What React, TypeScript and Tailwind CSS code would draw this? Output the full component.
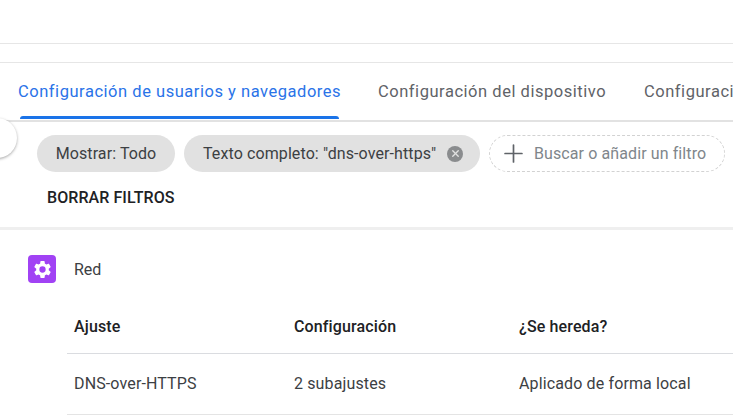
import { Plus, X } from 'lucide-react';

export default function App() {
  return (
    <div className="relative w-[733px] h-[416px] overflow-hidden bg-white font-['Roboto',sans-serif] text-[#3c4043]">
      <div className="h-[43px]" />
      <div className="h-[18px] border-y border-[#e6e6e6] box-content" />

      {/* Tabs */}
      <div className="flex h-[59px] border-b-2 border-[#e2e2e2] whitespace-nowrap text-[16.5px] tracking-[0.53px]">
        <div className="relative w-[360px] shrink-0 pl-[18px] pt-[17px] text-[#2a73e8]">
          Configuración de usuarios y navegadores
          <div className="absolute left-[20px] top-[53px] w-[319px] h-[3px] bg-[#1a73e8] rounded-t" />
        </div>
        <div className="w-[284px] shrink-0 pl-[18px] pt-[17px] text-[#5f6368]">Configuración del dispositivo</div>
        <div className="shrink-0 pt-[17px] text-[#5f6368]">Configuración</div>
      </div>

      {/* Collapse handle */}
      <div className="absolute left-[-23px] top-[118px] w-[40px] h-[40px] rounded-full bg-white shadow-[0_1px_3px_rgba(0,0,0,0.35)]" />

      {/* Filters */}
      <div className="flex items-center gap-[9px] pl-[37px] pt-[13px] whitespace-nowrap text-[16px] tracking-[0.1px]">
        <div className="flex items-center h-[37px] w-[138px] justify-center rounded-full bg-[#e1e1e1]">Mostrar: Todo</div>
        <div className="flex items-center h-[37px] w-[296px] pl-[19px] rounded-full bg-[#e1e1e1]">
          <span>Texto completo: "dns-over-https"</span>
          <span className="ml-[11px] flex items-center justify-center w-[16px] h-[16px] rounded-full bg-[#8a8c8e]">
            <X size={11} strokeWidth={3} className="text-[#e1e1e1]" />
          </span>
        </div>
        <div className="flex items-center h-[37px] w-[236px] pl-[9px] rounded-full border border-dashed border-[#d2d2d2]">
          <Plus size={29} strokeWidth={1.4} className="text-[#5f6368]" />
          <span className="ml-[6px] text-[#80868b]">Buscar o añadir un filtro</span>
        </div>
      </div>
      <div className="pl-[47px] pt-[16px] text-[16px] tracking-[0.08px] font-medium text-[#202124] leading-[20px]">BORRAR FILTROS</div>

      <div className="mt-[19px] h-[3px] bg-[#efefef]" />

      {/* Section */}
      <div className="flex items-center pl-[28px] pt-[25px]">
        <div className="flex items-center justify-center w-[28px] h-[28px] rounded-[4px] bg-[#a142f4]">
          <svg width="21" height="21" viewBox="0 0 24 24" fill="#fff">
            <path d="M19.14 12.94c.04-.3.06-.61.06-.94s-.02-.64-.07-.94l2.03-1.58a.49.49 0 0 0 .12-.61l-1.92-3.32a.49.49 0 0 0-.59-.22l-2.39.96a7 7 0 0 0-1.62-.94l-.36-2.54a.48.48 0 0 0-.48-.41h-3.84a.48.48 0 0 0-.47.41l-.36 2.54c-.59.24-1.13.57-1.62.94l-2.39-.96a.48.48 0 0 0-.59.22L2.74 8.87a.48.48 0 0 0 .12.61l2.03 1.58c-.05.3-.09.63-.09.94s.02.64.07.94l-2.03 1.58a.49.49 0 0 0-.12.61l1.92 3.32c.12.22.37.29.59.22l2.39-.96c.5.38 1.03.7 1.62.94l.36 2.54c.05.24.24.41.48.41h3.84c.24 0 .44-.17.47-.41l.36-2.54c.59-.24 1.13-.56 1.62-.94l2.39.96c.22.08.47 0 .59-.22l1.92-3.32a.48.48 0 0 0-.12-.61l-2.01-1.58zM12 15.6A3.6 3.6 0 1 1 12 8.4a3.6 3.6 0 0 1 0 7.2z" />
          </svg>
        </div>
        <span className="ml-[18px] pt-[1px] text-[16px] text-[#3c4043]">Red</span>
      </div>

      {/* Table */}
      <div className="ml-[67px] mt-[17px] text-[16px] tracking-[0.13px] whitespace-nowrap">
        <div className="grid grid-cols-[220px_225px_1fr] h-[54px] items-center border-b border-[#dadce0] pl-[7px] font-medium text-[#202124]">
          <span>Ajuste</span>
          <span>Configuración</span>
          <span>¿Se hereda?</span>
        </div>
        <div className="grid grid-cols-[220px_225px_1fr] h-[61px] items-center border-b border-[#e4e4e4] pl-[7px] text-[#3c4043]">
          <span>DNS-over-HTTPS</span>
          <span>2 subajustes</span>
          <span>Aplicado de forma local</span>
        </div>
      </div>
    </div>
  );
}
